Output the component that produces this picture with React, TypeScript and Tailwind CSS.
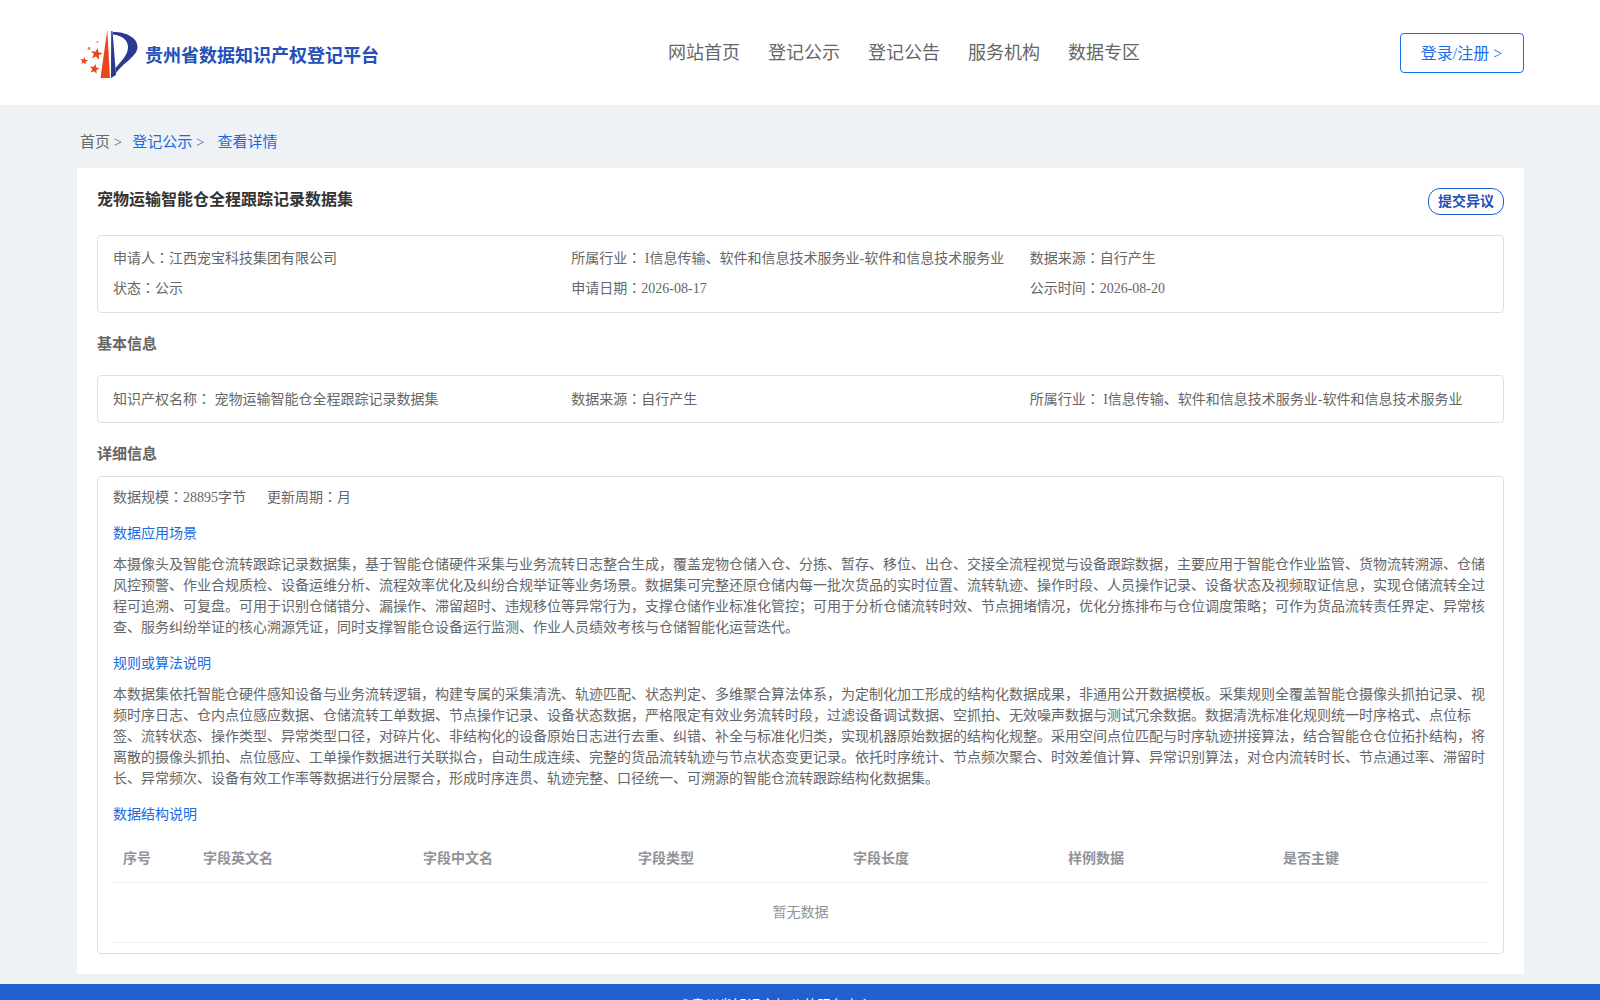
const font = "font-['Liberation_Serif','Noto_Sans_CJK_SC',serif]";

const star = (cx: number, cy: number, r: number, rot = 0) => {
  const pts: string[] = [];
  for (let i = 0; i < 10; i++) {
    const rad = i % 2 === 0 ? r : r * 0.42;
    const a = (Math.PI / 5) * i - Math.PI / 2 + rot;
    pts.push(`${(cx + rad * Math.cos(a)).toFixed(2)},${(cy + rad * Math.sin(a)).toFixed(2)}`);
  }
  return pts.join(" ");
};

const Logo = () => (
  <svg viewBox="0 0 70 60" className="w-[70px] h-[60px] shrink-0">
    <polygon points="32.3,7 25.5,55 35,55" fill="#e8471c" />
    <polygon points="36.2,8 36,55 41,52 37.5,8" fill="#2b3990" />
    <path d="M38 9 C52 9 62.5 15 62.5 24 C62.5 33 48 40 41 50 L40.5 45 C47 37 53 32 53 24 C53 17 47 12.5 38 11.5 Z" fill="#2b3990" />
    <polygon points={star(21.5, 31, 6.2, 0.2)} fill="#e8471c" />
    <polygon points={star(9, 38, 4.2, 0.2)} fill="#e8471c" />
    <polygon points={star(19.5, 46, 5.2, 0.2)} fill="#e8471c" />
    <circle cx="14" cy="25.5" r="1.4" fill="#f0805a" />
    <circle cx="22.5" cy="19" r="0.9" fill="#f0805a" />
  </svg>
);

// the colon sits centred in its box in the reference, as in the TC cut
const Colon = () => <span className="font-['Liberation_Serif','Noto_Sans_CJK_TC',serif]">：</span>;

const Section = ({ children }: { children: React.ReactNode }) => (
  <div className="text-[14px] leading-[21px] text-[#1a6be0]">{children}</div>
);

const columns = [
  { label: "序号", width: "w-[80px]" },
  { label: "字段英文名", width: "w-[220px]" },
  { label: "字段中文名", width: "w-[215px]" },
  { label: "字段类型", width: "w-[215px]" },
  { label: "字段长度", width: "w-[215px]" },
  { label: "样例数据", width: "w-[215px]" },
  { label: "是否主键", width: "w-[215px]" },
];

export default function App() {
  return (
    <div className={`${font} h-[1000px] overflow-hidden bg-[#eef2f5] text-[#666]`}>
      <header className="h-[105px] bg-white flex items-center pl-[75px] pr-[76px]">
        <div className="w-[593px] flex items-center">
          <Logo />
          <span className="text-[18px] font-bold text-[#2450b8] mt-[7px]">贵州省数据知识产权登记平台</span>
        </div>
        <nav className="flex-1 flex gap-[28px] text-[18px] text-[#666] pt-[1px]">
          <a>网站首页</a>
          <a>登记公示</a>
          <a>登记公告</a>
          <a>服务机构</a>
          <a>数据专区</a>
        </nav>
        <button className="w-[124px] h-[40px] rounded border border-[#1a6fe8] text-[16px] text-[#1a6fe8] pt-[2px] pr-[1px]">登录/注册 &gt;</button>
      </header>

      <div className="h-[63px] pl-[80px] flex items-center text-[15px] pt-[12px]">
        <span>首页 &gt;</span>
        <span className="ml-[10px] text-[#1a6be0]">登记公示 &gt;</span>
        <span className="ml-[13px] text-[#1a6be0]">查看详情</span>
      </div>

      <main className="mx-[77px] w-[1447px] h-[806px] bg-white px-[20px] pt-[20px]">
        <div className="flex justify-between items-start h-[47px]">
          <h1 className="text-[16px] leading-[24px] font-bold text-[#333]">宠物运输智能仓全程跟踪记录数据集</h1>
          <button className="w-[76px] h-[27px] rounded-[12px] border border-[#1a5fd0] text-[14px] font-bold text-[#1f52b8]">提交异议</button>
        </div>

        <div className="h-[78px] border border-[#dcdfe6] rounded px-[15px] py-[8px] grid grid-cols-3 text-[14px] leading-[30px]">
          <div>申请人<Colon />江西宠宝科技集团有限公司</div>
          <div>所属行业<Colon /> I信息传输、软件和信息技术服务业-软件和信息技术服务业</div>
          <div>数据来源<Colon />自行产生</div>
          <div>状态<Colon />公示</div>
          <div>申请日期<Colon />2026-08-17</div>
          <div>公示时间<Colon />2026-08-20</div>
        </div>

        <h2 className="mt-[20px] text-[15px] leading-[22px] font-bold">基本信息</h2>

        <div className="mt-[20px] h-[48px] border border-[#dcdfe6] rounded px-[15px] grid grid-cols-3 items-center text-[14px]">
          <div>知识产权名称<Colon /> 宠物运输智能仓全程跟踪记录数据集</div>
          <div>数据来源<Colon />自行产生</div>
          <div>所属行业<Colon /> I信息传输、软件和信息技术服务业-软件和信息技术服务业</div>
        </div>

        <h2 className="mt-[20px] text-[15px] leading-[22px] font-bold">详细信息</h2>

        <div className="mt-[11px] h-[478px] border border-[#dcdfe6] rounded px-[15px] pt-[10px] text-[14px] leading-[21px]">
          <div className="flex gap-[21px]">
            <span>数据规模<Colon />28895字节</span>
            <span>更新周期<Colon />月</span>
          </div>
          <div className="mt-[15px]"><Section>数据应用场景</Section></div>
          <p className="mt-[10px]">
            本摄像头及智能仓流转跟踪记录数据集，基于智能仓储硬件采集与业务流转日志整合生成，覆盖宠物仓储入仓、分拣、暂存、移位、出仓、交接全流程视觉与设备跟踪数据，主要应用于智能仓作业监管、货物流转溯源、仓储风控预警、作业合规质检、设备运维分析、流程效率优化及纠纷合规举证等业务场景。数据集可完整还原仓储内每一批次货品的实时位置、流转轨迹、操作时段、人员操作记录、设备状态及视频取证信息，实现仓储流转全过程可追溯、可复盘。可用于识别仓储错分、漏操作、滞留超时、违规移位等异常行为，支撑仓储作业标准化管控；可用于分析仓储流转时效、节点拥堵情况，优化分拣排布与仓位调度策略；可作为货品流转责任界定、异常核查、服务纠纷举证的核心溯源凭证，同时支撑智能仓设备运行监测、作业人员绩效考核与仓储智能化运营迭代。
          </p>
          <div className="mt-[15px]"><Section>规则或算法说明</Section></div>
          <p className="mt-[10px]">
            本数据集依托智能仓硬件感知设备与业务流转逻辑，构建专属的采集清洗、轨迹匹配、状态判定、多维聚合算法体系，为定制化加工形成的结构化数据成果，非通用公开数据模板。采集规则全覆盖智能仓摄像头抓拍记录、视频时序日志、仓内点位感应数据、仓储流转工单数据、节点操作记录、设备状态数据，严格限定有效业务流转时段，过滤设备调试数据、空抓拍、无效噪声数据与测试冗余数据。数据清洗标准化规则统一时序格式、点位标签、流转状态、操作类型、异常类型口径，对碎片化、非结构化的设备原始日志进行去重、纠错、补全与标准化归类，实现机器原始数据的结构化规整。采用空间点位匹配与时序轨迹拼接算法，结合智能仓仓位拓扑结构，将离散的摄像头抓拍、点位感应、工单操作数据进行关联拟合，自动生成连续、完整的货品流转轨迹与节点状态变更记录。依托时序统计、节点频次聚合、时效差值计算、异常识别算法，对仓内流转时长、节点通过率、滞留时长、异常频次、设备有效工作率等数据进行分层聚合，形成时序连贯、轨迹完整、口径统一、可溯源的智能仓流转跟踪结构化数据集。
          </p>
          <div className="mt-[15px]"><Section>数据结构说明</Section></div>

          <div className="mt-[11px] flex h-[47px] pb-[1px] items-center border-b border-[#ebeef5] font-bold text-[#909399]">
            {columns.map((c) => (
              <div key={c.label} className={`${c.width} px-[10px]`}>{c.label}</div>
            ))}
          </div>
          <div className="h-[60px] flex items-center justify-center border-b border-[#ebeef5] text-[#909399]">暂无数据</div>
        </div>
      </main>

      <footer className="mt-[10px] h-[60px] bg-[#2260cf] pt-[11px] pl-[680px] text-[14px] text-white">
        ©贵州省知识产权公共服务中心
      </footer>
    </div>
  );
}
